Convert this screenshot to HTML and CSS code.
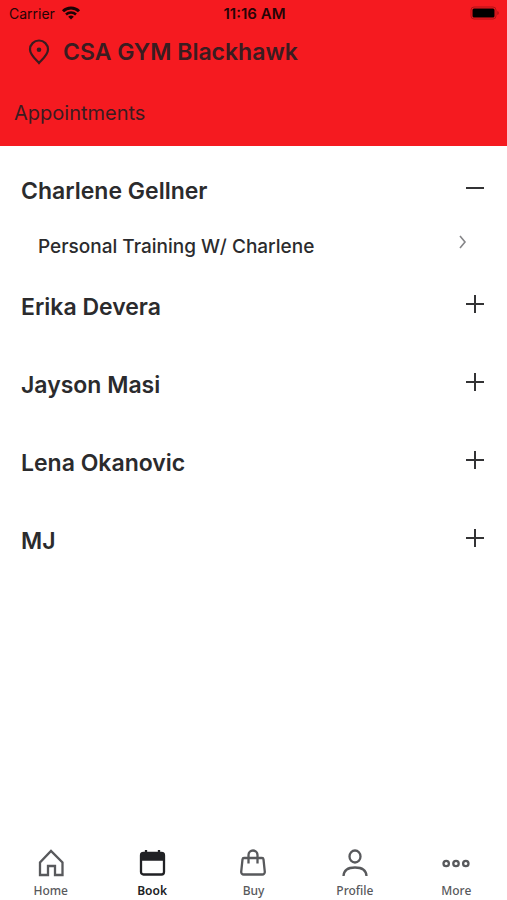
FILE: index.html
```html
<!DOCTYPE html>
<html lang="en">
<head>
    <meta charset="UTF-8">
    <meta name="viewport" content="width=device-width, initial-scale=1.0">
    <title>Appointments</title>
    <link rel="stylesheet" href="styles.css">
</head>
<body>
    <header class="header">
        <div class="status-bar">
            <div class="carrier">
                <span>Carrier</span>
                <svg width="20" height="14" viewBox="0 0 18 14" fill="none" stroke="#1c0305" stroke-width="3" aria-hidden="true">
                    <path d="M1 5.2a11.4 11.4 0 0 1 16 0"/>
                    <path d="M4 8.5a7.2 7.2 0 0 1 10 0" stroke-width="2.5"/>
                    <path d="M9 13.6 6.2 10.8a4 4 0 0 1 5.6 0z" fill="#1c0305" stroke="none"/>
                </svg>
            </div>
            <time class="time">11:16 AM</time>
            <svg class="battery" width="30" height="14" viewBox="0 0 30 14" aria-hidden="true">
                <rect x="1" y="1" width="25" height="12" rx="3" fill="none" stroke="#b01217"/>
                <rect x="2.5" y="2.5" width="22" height="9" rx="1.5" fill="#000"/>
                <path d="M27.5 5v4a2.4 2.4 0 0 0 0-4z" fill="#8c0d12"/>
            </svg>
        </div>
        <div class="location">
            <svg width="22" height="26" viewBox="0 0 22 26" fill="none" stroke="#3a1c20" stroke-width="2.2" aria-hidden="true">
                <path d="M11 24C8 20.6 2 15.8 2 10.5a9 9 0 0 1 18 0C20 15.8 14 20.6 11 24z"/>
                <circle cx="11" cy="10.8" r="2.3" fill="#3a1c20" stroke="none"/>
            </svg>
            <h1>CSA GYM Blackhawk</h1>
        </div>
        <h2 class="page-title">Appointments</h2>
    </header>

    <main class="trainers">
        <section class="trainer open">
            <button type="button" class="trainer-toggle" aria-expanded="true">
                <span>Charlene Gellner</span>
                <svg class="toggle-icon" viewBox="0 0 20 26" aria-hidden="true"><path d="M1 10h18"/><path class="bar" d="M10 1v18"/></svg>
            </button>
            <a class="service" href="#training">
                <span>Personal Training W/ Charlene</span>
                <svg class="chevron" viewBox="0 0 8 22" aria-hidden="true"><path d="M1 1l5 6-5 6"/></svg>
            </a>
        </section>
        <section class="trainer">
            <button type="button" class="trainer-toggle" aria-expanded="false">
                <span>Erika Devera</span>
                <svg class="toggle-icon" viewBox="0 0 20 26" aria-hidden="true"><path d="M1 10h18"/><path class="bar" d="M10 1v18"/></svg>
            </button>
        </section>
        <section class="trainer">
            <button type="button" class="trainer-toggle" aria-expanded="false">
                <span>Jayson Masi</span>
                <svg class="toggle-icon" viewBox="0 0 20 26" aria-hidden="true"><path d="M1 10h18"/><path class="bar" d="M10 1v18"/></svg>
            </button>
        </section>
        <section class="trainer">
            <button type="button" class="trainer-toggle" aria-expanded="false">
                <span>Lena Okanovic</span>
                <svg class="toggle-icon" viewBox="0 0 20 26" aria-hidden="true"><path d="M1 10h18"/><path class="bar" d="M10 1v18"/></svg>
            </button>
        </section>
        <section class="trainer">
            <button type="button" class="trainer-toggle" aria-expanded="false">
                <span>MJ</span>
                <svg class="toggle-icon" viewBox="0 0 20 26" aria-hidden="true"><path d="M1 10h18"/><path class="bar" d="M10 1v18"/></svg>
            </button>
        </section>
    </main>

    <nav class="tab-bar">
        <a class="tab" href="#home">
            <svg viewBox="0 0 28 28" aria-hidden="true"><path d="M3 26V13.500L14 2l11.500 11.500V26H18v-9h-7v9z"/></svg>
            <span>Home</span>
        </a>
        <a class="tab active" href="#book" aria-current="page">
            <svg viewBox="0 0 28 28" aria-hidden="true">
                <rect x="3" y="4" width="23" height="21.500" rx="2.500"/>
                <path d="M4 5h21v5.500H4z" fill="currentColor"/>
                <path d="M8 1v4M21 1v4"/>
            </svg>
            <span>Book</span>
        </a>
        <a class="tab" href="#buy">
            <svg viewBox="0 0 28 28" aria-hidden="true">
                <path d="M5 9h18a1.500 1.500 0 0 1 1.500 1.300l1.300 12.500a2.500 2.500 0 0 1-2.500 2.700H4.700a2.500 2.500 0 0 1-2.500-2.700l1.300-12.500A1.500 1.500 0 0 1 5 9z"/>
                <path d="M9.500 14.500V6a4.500 4.500 0 0 1 9 0v8.500"/>
            </svg>
            <span>Buy</span>
        </a>
        <a class="tab" href="#profile">
            <svg viewBox="0 0 28 28" aria-hidden="true">
                <ellipse cx="14" cy="7.500" rx="5.500" ry="6"/>
                <path d="M2.500 27c.3-5.600 4-8.500 11.500-8.500s11.200 2.900 11.500 8.500"/>
            </svg>
            <span>Profile</span>
        </a>
        <a class="tab" href="#more">
            <svg viewBox="0 0 28 28" aria-hidden="true">
                <circle cx="4.200" cy="14.500" r="2.700"/>
                <circle cx="14" cy="14.500" r="2.700"/>
                <circle cx="23.800" cy="14.500" r="2.700"/>
            </svg>
            <span>More</span>
        </a>
    </nav>

    <script>
        document.querySelectorAll('.trainer-toggle').forEach(function(button) {
            button.addEventListener('click', function() {
                const open = button.parentElement.classList.toggle('open');
                button.setAttribute('aria-expanded', open);
            });
        });
    </script>
</body>
</html>
```
FILE: styles.css
```css
* {
    box-sizing: border-box;
}
body {
    display: flex;
    flex-direction: column;
    min-height: 100vh;
    margin: 0;
    background: #fff;
    color: #2b2b2d;
    font-family: Inter, "Liberation Sans", sans-serif;
}
h1, h2 {
    margin: 0;
}
a {
    color: inherit;
    text-decoration: none;
}

/* Header */
.header {
    padding-bottom: 20px;
    background: #f51a20;
    color: #3a1c20;
}
.status-bar {
    display: grid;
    grid-template-columns: 1fr auto 1fr;
    align-items: center;
    height: 28px;
    padding: 0 7px 2px 9px;
    color: #260406;
    font-size: 14px;
}
.carrier {
    display: flex;
    align-items: center;
    gap: 6px;
}
.time {
    font-size: 15px;
    font-weight: 600;
}
.battery {
    justify-self: end;
}
.location {
    display: flex;
    align-items: center;
    gap: 13px;
    height: 48px;
    padding-left: 28px;
}
.location h1 {
    font-size: 23px;
    font-weight: 600;
}
.page-title {
    padding: 24px 14px 0;
    font-size: 20px;
    font-weight: 400;
    line-height: 26px;
}

/* Trainer list */
.trainers {
    flex: 1;
    padding-top: 6px;
}
.trainer-toggle {
    display: flex;
    align-items: center;
    justify-content: space-between;
    width: 100%;
    height: 78px;
    padding: 0 22px 0 21px;
    border: 0;
    background: none;
    color: inherit;
    font: 600 23px Inter, "Liberation Sans", sans-serif;
    text-align: left;
    cursor: pointer;
}
.toggle-icon {
    width: 20px;
    height: 26px;
    fill: none;
    stroke: #333335;
    stroke-width: 2;
}
.trainer.open .bar {
    display: none;
}
.service {
    display: none;
    align-items: center;
    justify-content: space-between;
    height: 38px;
    padding: 0 40px 6px 38px;
    font-size: 19px;
    font-weight: 500;
}
.trainer.open .service {
    display: flex;
}
.chevron {
    width: 8px;
    height: 22px;
    fill: none;
    stroke: #858588;
    stroke-width: 1.6;
}

/* Bottom tabs */
.tab-bar {
    display: grid;
    grid-template-columns: repeat(5, 1fr);
    padding: 0 0 1px;
}
.tab {
    display: flex;
    flex-direction: column;
    align-items: center;
    gap: 6px;
    color: #58595c;
    font-family: "Noto Sans", sans-serif;
    font-size: 12px;
    font-weight: 500;
    line-height: 16px;
}
.tab.active {
    color: #202124;
    font-weight: 600;
}
.tab svg {
    width: 28px;
    height: 28px;
    fill: none;
    stroke: currentColor;
    stroke-width: 2.3;
}
```
